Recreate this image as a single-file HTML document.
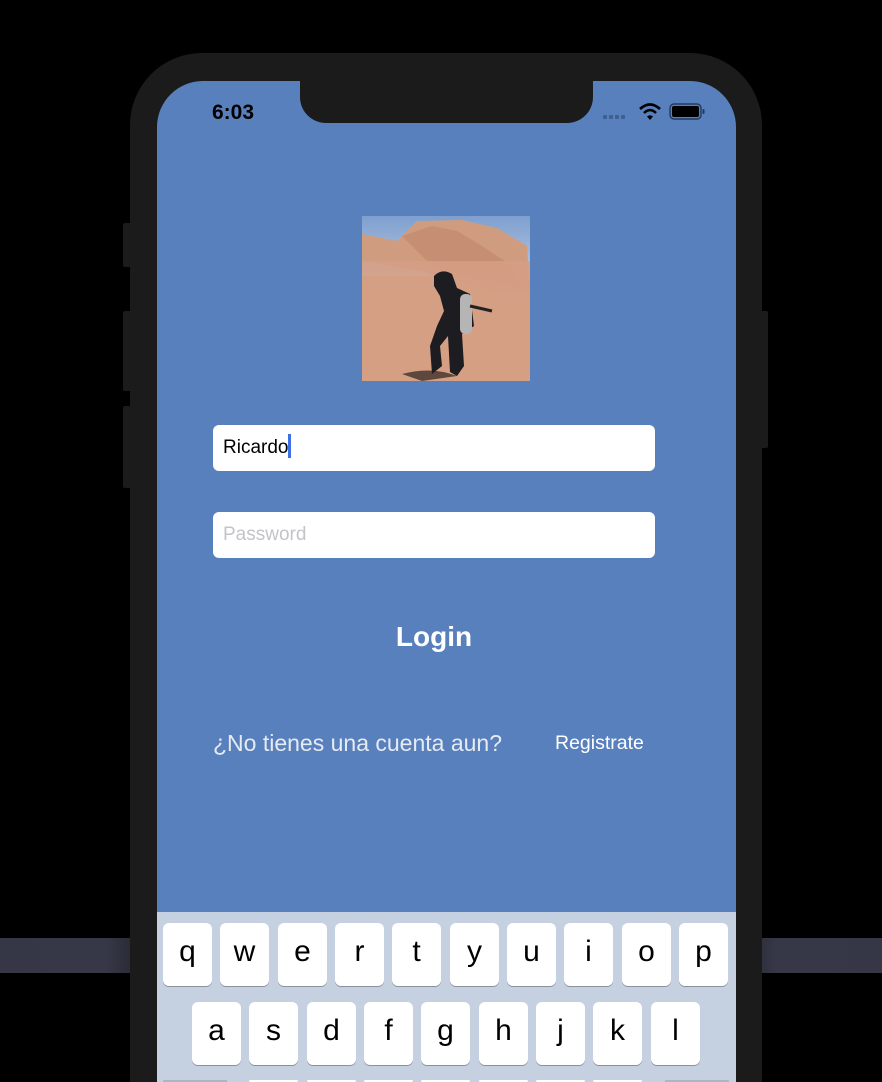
<!DOCTYPE html>
<html><head><meta charset="utf-8"><style>
*{margin:0;padding:0;box-sizing:border-box}
html,body{width:882px;height:1082px;overflow:hidden}
body{background:#000;position:relative;font-family:"Liberation Sans",Arial,sans-serif}
.band{position:absolute;left:0;right:0;top:938px;height:35px;background:linear-gradient(90deg,#353746 0%,#363848 12%,#2a2b36 15%,#2a2b36 85%,#363848 88%,#353746 100%)}
.frame{position:absolute;left:130px;top:53px;width:632px;height:1029px;background:#1b1b1b;border-radius:72px 72px 0 0}
.btn{position:absolute;background:#1b1b1b;width:8px;border-radius:2px}
.screen{position:absolute;left:157px;top:81px;width:579px;height:1001px;background:#5880bd;border-radius:46px 46px 0 0;overflow:hidden}
.notch{position:absolute;left:143px;top:-2px;width:293px;height:44px;background:#1b1b1b;border-radius:0 0 26px 26px}
.time{position:absolute;left:55px;top:20px;font-size:21px;font-weight:bold;color:#000}
.inp{position:absolute;left:56px;width:442px;height:46px;background:#fff;border-radius:6px;font-size:19px;padding-left:10px;line-height:46px}
.kb{position:absolute;left:0;top:831px;width:579px;height:170px;background:#c5d0e0;overflow:hidden}
.k{position:absolute;width:49px;height:63px;background:#fff;border-radius:6px;box-shadow:0 1px 0 #8a919c;font-size:30px;text-align:center;line-height:58px;color:#000}
</style></head><body>
<div class="band"></div>
<div class="frame"></div>
<div class="btn" style="left:123px;top:223px;height:44px"></div>
<div class="btn" style="left:123px;top:311px;height:80px"></div>
<div class="btn" style="left:123px;top:406px;height:82px"></div>
<div class="btn" style="left:760px;top:311px;height:137px"></div>
<div class="screen">
<div class="notch"></div>
<div class="time">6:03</div>
<div style="position:absolute;left:446px;top:34px;display:flex;gap:2px"><i style="width:4px;height:4px;background:#3e5f8f;border-radius:1px;display:block"></i><i style="width:4px;height:4px;background:#3e5f8f;border-radius:1px;display:block"></i><i style="width:4px;height:4px;background:#3e5f8f;border-radius:1px;display:block"></i><i style="width:4px;height:4px;background:#3e5f8f;border-radius:1px;display:block"></i></div>
<svg style="position:absolute;left:482px;top:22px" width="22" height="18" viewBox="0 0 22 18"><path d="M1 6 Q11 -3 21 6" stroke="#000" stroke-width="2.6" fill="none"/><path d="M5 10 Q11 4 17 10" stroke="#000" stroke-width="2.6" fill="none"/><path d="M8 13.5 L11 17 L14 13.5 Q11 11 8 13.5Z" fill="#000"/></svg>
<svg style="position:absolute;left:512px;top:22px" width="38" height="18" viewBox="0 0 38 18"><rect x="1" y="1" width="31" height="15" rx="4" stroke="#213a60" stroke-width="1.4" fill="none"/><rect x="3" y="3" width="27" height="11" rx="2" fill="#000"/><rect x="33.5" y="6" width="2" height="5" rx="1" fill="#213a60"/></svg>
<svg style="position:absolute;left:205px;top:135px" width="168" height="165" viewBox="0 0 168 165">
<defs><linearGradient id="sky" x1="0" y1="0" x2="0" y2="1"><stop offset="0" stop-color="#7d9fd0"/><stop offset="1" stop-color="#b9c7dc"/></linearGradient></defs>
<rect width="168" height="165" fill="#d49f85"/>
<rect width="168" height="60" fill="url(#sky)"/>
<path d="M0 18 L35 25 L55 5 L100 4 L135 12 L165 30 L168 75 L150 78 L110 70 L60 55 L0 45Z" fill="#cf9c80"/>
<path d="M40 20 L70 10 L95 15 L120 30 L150 50 L160 72 L110 62 L70 50Z" fill="#c0876c" opacity=".6"/>
<rect y="45" width="168" height="120" fill="#d59f84" opacity=".9"/>
<path d="M40 158 Q70 150 95 160 L60 165Z" fill="#2b2420" opacity=".7"/>
<path d="M72 60 Q80 52 90 58 L95 72 L108 78 L112 110 L100 118 L102 150 L95 160 L88 156 L86 120 L78 130 L80 150 L70 158 L68 130 L75 110 L82 95 L78 80 L72 70Z" fill="#1d1c20"/>
<rect x="98" y="78" width="12" height="40" rx="5" fill="#b5b5b5"/>
<path d="M108 90 L130 95" stroke="#222" stroke-width="3"/>
</svg>
<div class="inp" style="top:344px;color:#000">Ricardo<span style="display:inline-block;width:3px;height:24px;background:#3d6fe6;vertical-align:middle;margin-top:-3px"></span></div>
<div class="inp" style="top:431px;color:#c4c4c8">Password</div>
<div style="position:absolute;left:0;width:554px;text-align:center;top:540px;font-size:28px;font-weight:bold;color:#fff">Login</div>
<div style="position:absolute;left:56px;top:649px;font-size:23px;color:#e6eaf2">¿No tienes una cuenta aun?</div>
<div style="position:absolute;left:398px;top:651px;font-size:19.5px;color:#fff">Registrate</div>
<div class="kb">
<div class="k" style="left:6px;top:11px">q</div><div class="k" style="left:63px;top:11px">w</div><div class="k" style="left:121px;top:11px">e</div><div class="k" style="left:178px;top:11px">r</div><div class="k" style="left:235px;top:11px">t</div><div class="k" style="left:293px;top:11px">y</div><div class="k" style="left:350px;top:11px">u</div><div class="k" style="left:407px;top:11px">i</div><div class="k" style="left:465px;top:11px">o</div><div class="k" style="left:522px;top:11px">p</div>
<div class="k" style="left:35px;top:90px">a</div><div class="k" style="left:92px;top:90px">s</div><div class="k" style="left:150px;top:90px">d</div><div class="k" style="left:207px;top:90px">f</div><div class="k" style="left:264px;top:90px">g</div><div class="k" style="left:322px;top:90px">h</div><div class="k" style="left:379px;top:90px">j</div><div class="k" style="left:436px;top:90px">k</div><div class="k" style="left:494px;top:90px">l</div>
<div class="k" style="left:6px;top:168px;width:64px;height:2px;background:#aab6c8"></div>
<div class="k" style="left:92px;top:168px;height:2px"></div><div class="k" style="left:150px;top:168px;height:2px"></div><div class="k" style="left:207px;top:168px;height:2px"></div><div class="k" style="left:264px;top:168px;height:2px"></div><div class="k" style="left:322px;top:168px;height:2px"></div><div class="k" style="left:379px;top:168px;height:2px"></div><div class="k" style="left:436px;top:168px;height:2px"></div>
<div class="k" style="left:508px;top:168px;width:64px;height:2px;background:#aab6c8"></div>
</div>
</div>
</body></html>
